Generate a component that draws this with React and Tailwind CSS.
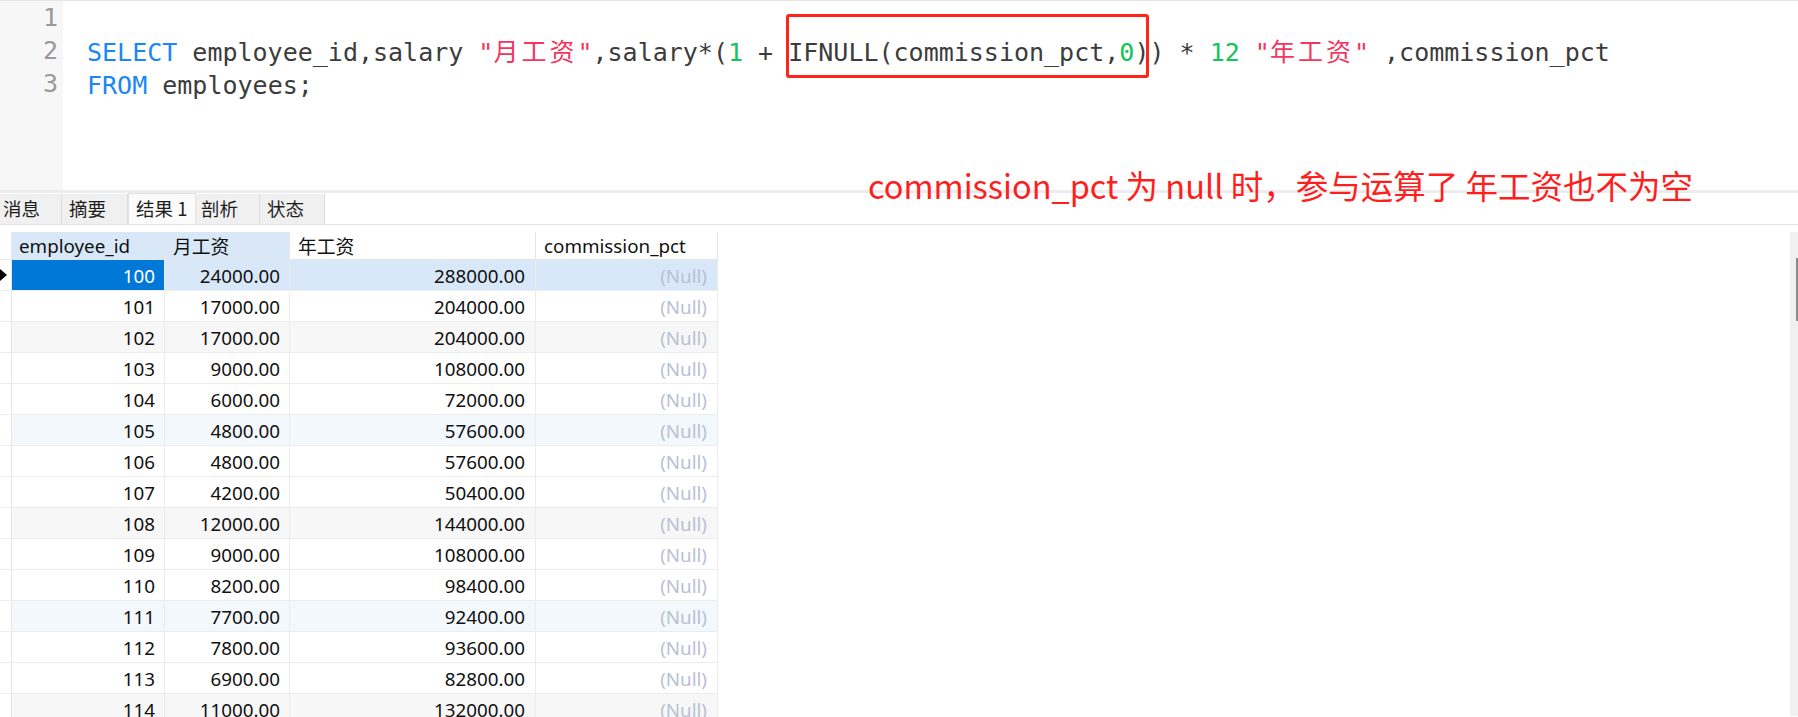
const rows = [
  ["100", "24000.00", "288000.00"],
  ["101", "17000.00", "204000.00"],
  ["102", "17000.00", "204000.00"],
  ["103", "9000.00", "108000.00"],
  ["104", "6000.00", "72000.00"],
  ["105", "4800.00", "57600.00"],
  ["106", "4800.00", "57600.00"],
  ["107", "4200.00", "50400.00"],
  ["108", "12000.00", "144000.00"],
  ["109", "9000.00", "108000.00"],
  ["110", "8200.00", "98400.00"],
  ["111", "7700.00", "92400.00"],
  ["112", "7800.00", "93600.00"],
  ["113", "6900.00", "82800.00"],
  ["114", "11000.00", "132000.00"],
];

const tabs = [
  { label: "消息", cls: "w-[62px] pl-[3px]" },
  { label: "摘要", cls: "w-[66px] pl-[7px]" },
  { label: "结果 1", cls: "w-[68px] pl-[7px]", active: true },
  { label: "剖析", cls: "w-[64px] pl-[5px]" },
  { label: "状态", cls: "w-[65px] pl-[7px]" },
];

// every third row is tinted, alternating gray / blue
function rowBg(i) {
  if (i === 0) return "bg-[#d8e8f8]";
  if (i % 3 !== 2) return "bg-white";
  return Math.floor(i / 3) % 2 === 0 ? "bg-[#f7f7f7]" : "bg-[#f3f8fd]";
}

function Cjk({ children }) {
  return (
    <span className="font-['Noto_Sans_CJK_SC',sans-serif] tracking-[3px]">
      {children}
    </span>
  );
}

function Editor() {
  return (
    <div className="relative h-[190px] border-t border-[#e6e6e6] flex">
      <div className="w-[63px] bg-[#f7f7f7] pr-[5px] flex flex-col items-end text-[#9a9a9a]">
        <div className="leading-[33px]">1</div>
        <div className="leading-[33px]">2</div>
        <div className="leading-[33px]">3</div>
      </div>
      <div className="pl-[24px] text-[#3c3c3c] whitespace-pre">
        <div className="leading-[33px]">&nbsp;</div>
        <div className="leading-[33px]">
          <span className="text-[#1a87f5]">SELECT</span> employee_id,salary{" "}
          <span className="text-[#f3365f]">
            "<Cjk>月工资</Cjk>"
          </span>
          ,salary*(<span className="text-[#14c45a]">1</span> + IFNULL(commission_pct,
          <span className="text-[#14c45a]">0</span>)) *{" "}
          <span className="text-[#14c45a]">12</span>{" "}
          <span className="text-[#f3365f]">
            "<Cjk>年工资</Cjk>"
          </span>{" "}
          ,commission_pct
        </div>
        <div className="leading-[33px]">
          <span className="text-[#1a87f5]">FROM</span> employees;
        </div>
      </div>
      <div className="absolute left-[786px] top-[13px] w-[363px] h-[64px] border-[3px] border-[#ff2418] rounded-[3px]" />
    </div>
  );
}

function TabBar() {
  return (
    <div className="h-[32px] flex items-end border-b border-[#e2e2e2] font-['Noto_Sans_CJK_SC',sans-serif] text-[18.5px] text-[#1e1e1e]">
      {tabs.map((t) =>
        t.active ? (
          <div
            key={t.label}
            className={t.cls + " h-[31px] bg-[#fbfbfb] border-x border-t border-[#e2e2e2] flex items-center"}
          >
            {t.label}
          </div>
        ) : (
          <div
            key={t.label}
            className={t.cls + " h-[30px] bg-[#f0f0f0] border-r border-[#dcdcdc] flex items-center"}
          >
            {t.label}
          </div>
        )
      )}
    </div>
  );
}

function Grid() {
  return (
    <div className="flex pt-[7px] h-[491px]">
      <div className="w-[718px] font-['Noto_Sans','Noto_Sans_CJK_SC',sans-serif] text-[18.8px] text-[#111]">
        <div className="flex h-[28px] border-b border-[#e6e6e6]">
          <div className="w-[12px] border-r border-[#e6e6e6]" />
          <div className="w-[153px] pl-[7px] pt-[1px] bg-[#d8e8f8] border-r border-[#e6e6e6] flex items-center">
            employee_id
          </div>
          <div className="w-[125px] pl-[8px] pt-[1px] bg-[#d8e8f8] border-r border-[#e6e6e6] flex items-center font-['Noto_Sans_CJK_SC',sans-serif]">
            月工资
          </div>
          <div className="w-[246px] pl-[8px] pt-[1px] border-r border-[#e6e6e6] flex items-center font-['Noto_Sans_CJK_SC',sans-serif]">
            年工资
          </div>
          <div className="w-[182px] pl-[8px] pt-[1px] border-r border-[#e6e6e6] flex items-center">
            commission_pct
          </div>
        </div>
        {rows.map((r, i) => (
          <div key={r[0]} className={"flex h-[31px] border-b border-[#ececec] " + rowBg(i)}>
            <div className="w-[12px] bg-white border-r border-[#e6e6e6] flex items-center">
              {i === 0 && (
                <svg width="7" height="12" viewBox="0 0 7 12">
                  <path d="M0 0 L7 6 L0 12 Z" fill="#000" />
                </svg>
              )}
            </div>
            <div
              className={
                i === 0
                  ? "w-[153px] pr-[9px] pt-[2px] bg-[#0078d7] text-white flex items-center justify-end border-r border-[#ececec]"
                  : "w-[153px] pr-[9px] pt-[2px] flex items-center justify-end border-r border-[#ececec]"
              }
            >
              {r[0]}
            </div>
            <div className="w-[125px] pr-[9px] pt-[2px] flex items-center justify-end border-r border-[#ececec]">
              {r[1]}
            </div>
            <div className="w-[246px] pr-[10px] pt-[2px] flex items-center justify-end border-r border-[#ececec]">
              {r[2]}
            </div>
            <div className="w-[182px] pr-[10px] pt-[2px] flex items-center justify-end border-r border-[#ececec] text-[#b9c1d3]">
              (Null)
            </div>
          </div>
        ))}
      </div>
      <div className="ml-auto w-[8px] bg-[#f0f0f0] flex justify-end">
        <div className="w-[2px] h-[63px] mt-[26px] bg-[#8c8c8c]" />
      </div>
    </div>
  );
}

export default function App() {
  return (
    <div className="relative w-[1798px] h-[717px] overflow-hidden bg-white font-['DejaVu_Sans_Mono',monospace] text-[25px]">
      <Editor />
      <div className="h-[3px] bg-[#ececec]" />
      <TabBar />
      <Grid />
      <div className="absolute left-[868px] top-[165px] leading-[40px] text-[32.5px] text-[#ff1e1e] font-['Noto_Sans_CJK_SC',sans-serif] whitespace-nowrap">
        commission_pct 为 null 时，参与运算了 年工资也不为空
      </div>
    </div>
  );
}
